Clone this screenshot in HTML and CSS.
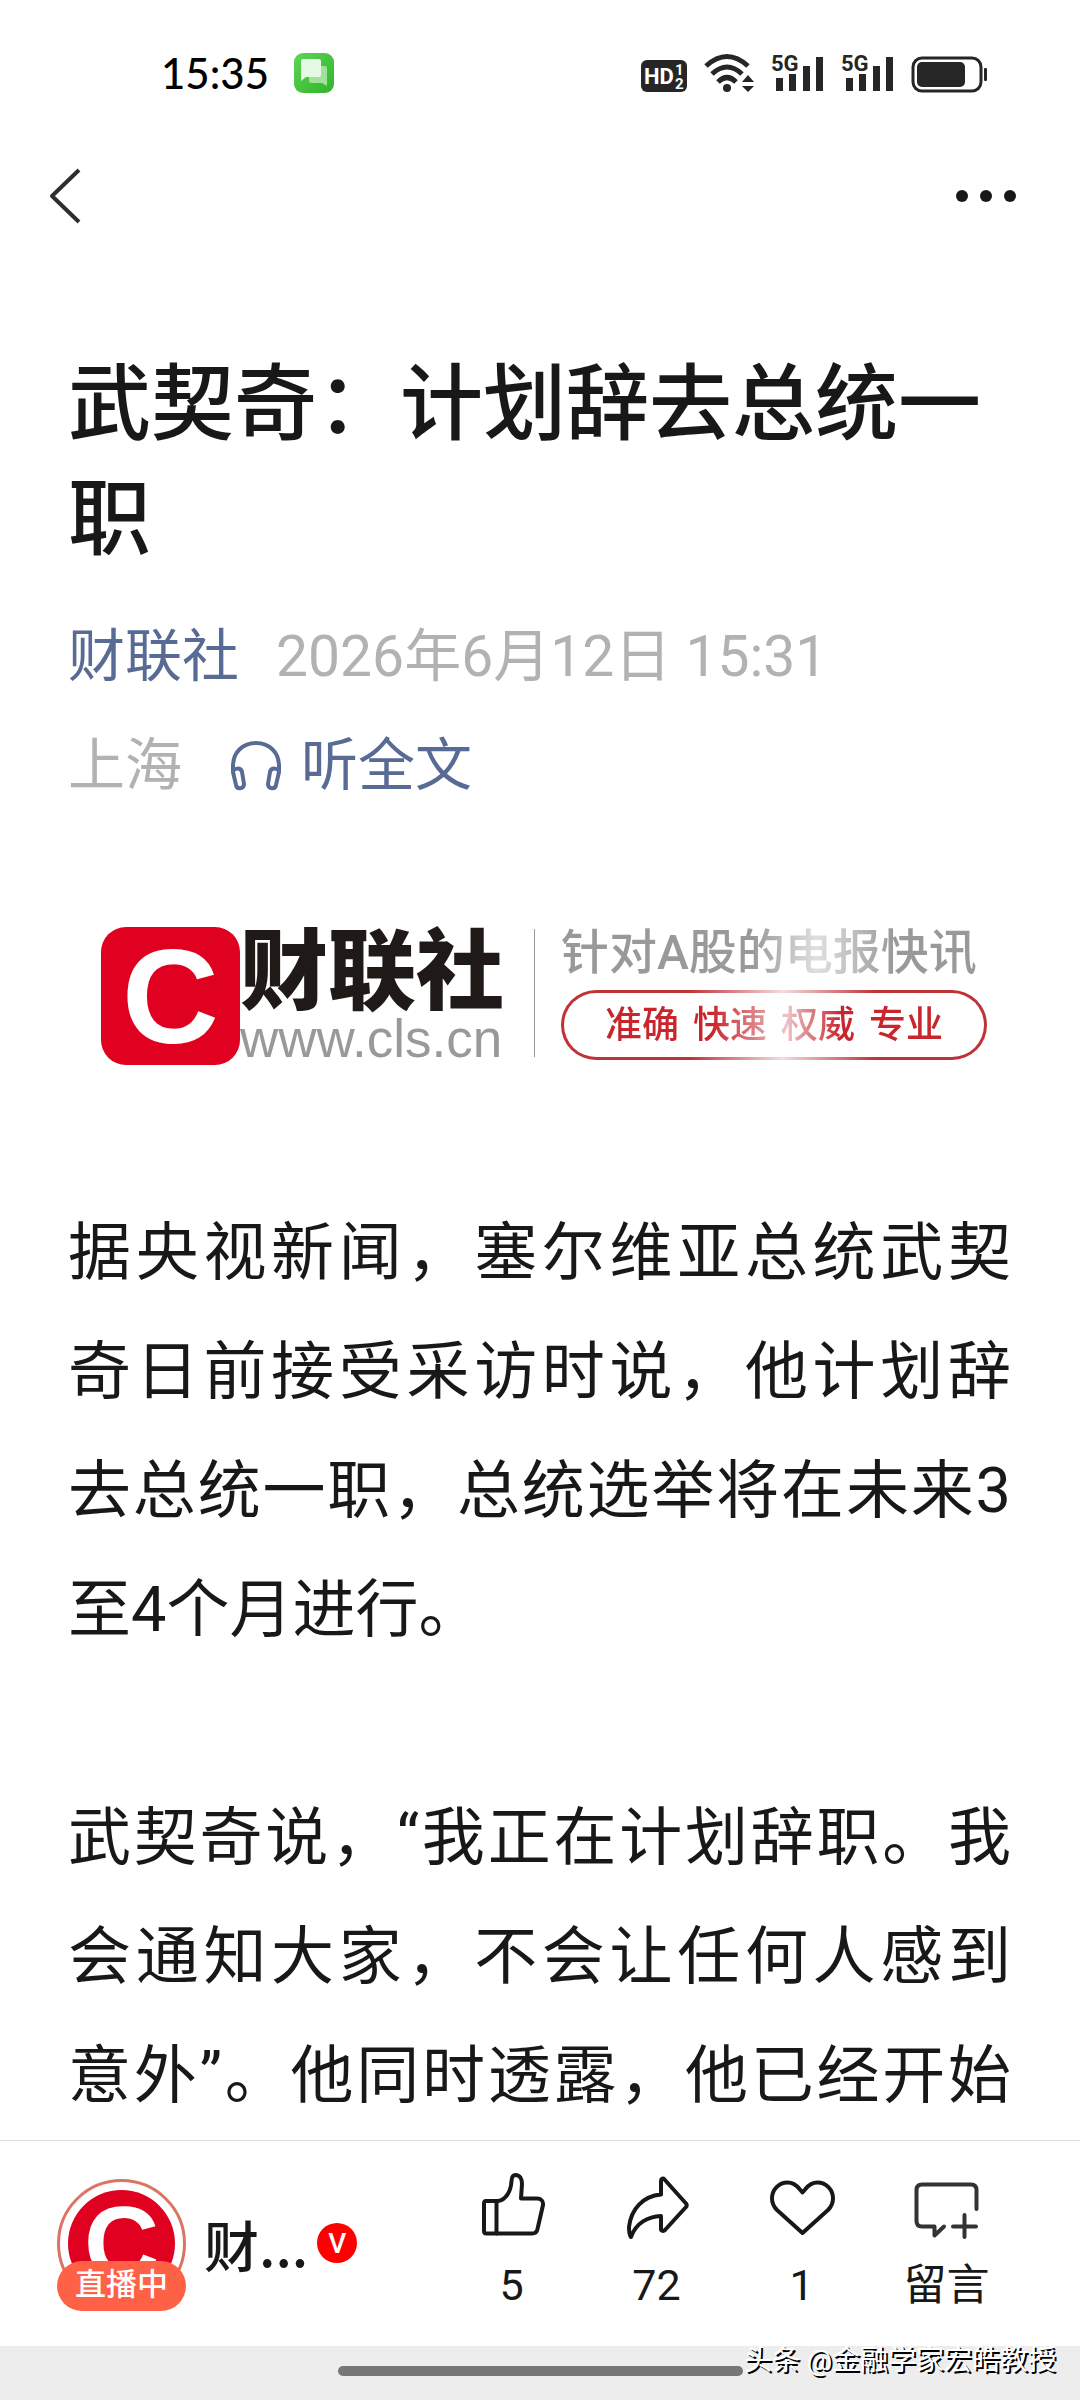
FILE: index.html
```html
<!DOCTYPE html>
<html lang="zh-CN">
<head>
    <meta charset="UTF-8">
    <meta name="viewport" content="width=device-width, initial-scale=1.0">
    <title>武契奇：计划辞去总统一职</title>
    <link rel="stylesheet" href="styles.css">
</head>
<body>
    <div class="status-bar">
        <div class="status-left">
            <span class="clock">15:35</span>
            <svg width="40" height="40" viewBox="0 0 40 40" aria-hidden="true">
                <defs>
                    <linearGradient id="green" x1="0" y1="0" x2="1" y2="1">
                        <stop offset="0" stop-color="#5fd455"/>
                        <stop offset="1" stop-color="#2fb52a"/>
                    </linearGradient>
                </defs>
                <rect width="40" height="40" rx="9" fill="url(#green)"/>
                <path d="M15 13H31Q33 13 33 15V33L28 30H17Q15 30 15 28Z" fill="#9fe39a"/>
                <path d="M9 6H25Q27 6 27 8V22Q27 24 25 24H12L7 28V8Q7 6 9 6Z" fill="#e6f9e5"/>
            </svg>
        </div>
        <div class="status-right">
            <svg width="46" height="38" viewBox="0 0 46 38" aria-hidden="true">
                <rect y="6" width="46" height="32" rx="6" fill="#262626"/>
                <g class="badge-text">
                    <text x="3" y="30" font-size="22">HD</text>
                    <text x="34" y="21" font-size="15">1</text>
                    <text x="34" y="35" font-size="15">2</text>
                </g>
            </svg>
            <svg width="50" height="38" viewBox="0 0 50 38" aria-hidden="true">
                <g fill="none" stroke="#262626" stroke-width="5">
                    <path d="M2 12Q23 -7 44 12"/>
                    <path d="M8 20Q23 6 38 20"/>
                    <path d="M14 28Q23 19 32 28"/>
                </g>
                <circle cx="23" cy="34" r="4" fill="#262626"/>
                <path d="M38 28L44 21L50 28ZM38 32H50L44 38Z" fill="#262626"/>
            </svg>
            <svg width="53" height="38" viewBox="0 0 53 38" aria-hidden="true">
                <text class="network" x="0" y="17">5G</text>
                <path d="M5 24h7v13h-7zM18 20h7v17h-7zM32 12h7v25h-7zM45 3h7v34h-7z" fill="#262626"/>
            </svg>
            <svg width="53" height="38" viewBox="0 0 53 38" aria-hidden="true">
                <text class="network" x="0" y="17">5G</text>
                <path d="M5 24h7v13h-7zM18 20h7v17h-7zM32 12h7v25h-7zM45 3h7v34h-7z" fill="#262626"/>
            </svg>
            <svg width="76" height="38" viewBox="0 0 76 38" aria-hidden="true">
                <rect x="2" y="4" width="68" height="33" rx="9" fill="none" stroke="#262626" stroke-width="3"/>
                <rect x="6" y="8" width="48" height="25" rx="5" fill="#262626"/>
                <rect x="73" y="14" width="3" height="13" rx="1" fill="#262626"/>
            </svg>
        </div>
    </div>

    <nav class="nav">
        <button type="button" class="nav-button" aria-label="返回">
            <svg width="36" height="60" viewBox="0 0 36 60">
                <path d="M32 4L5 30L32 56" fill="none" stroke="#2e2e2e" stroke-width="4" stroke-linejoin="round"/>
            </svg>
        </button>
        <button type="button" class="nav-button" aria-label="更多">
            <svg width="60" height="60" viewBox="0 0 60 60">
                <g fill="#181818">
                    <circle cx="6" cy="30" r="6"/>
                    <circle cx="30" cy="30" r="6"/>
                    <circle cx="54" cy="30" r="6"/>
                </g>
            </svg>
        </button>
    </nav>

    <main class="article">
        <h1>武契奇：计划辞去总统一职</h1>
        <div class="meta">
            <div class="meta-row">
                <a href="#">财联社</a>
                <span>2026年6月12日 15:31</span>
            </div>
            <div class="meta-row meta-place">
                <span>上海</span>
                <a href="#" class="listen">
                    <svg width="50" height="50" viewBox="0 0 50 50" fill="none" stroke="#576b95" stroke-width="4" stroke-linejoin="round" aria-hidden="true">
                        <path d="M2 32V25C2 11 12 2 25 2S48 11 48 25V32"/>
                        <path d="M2 31C2 27 10 26 11 31L13 43C13 48 6 49 5 44Z"/>
                        <path d="M48 31C48 27 40 26 39 31L37 43C37 48 44 49 45 44Z"/>
                    </svg>
                    听全文
                </a>
            </div>
        </div>

        <div class="banner">
            <span class="logo">C</span>
            <div class="brand">
                <strong>财联社</strong>
                <span>www.cls.cn</span>
            </div>
            <div class="slogan">
                <span class="slogan-title">针对A股的电报快讯</span>
                <div class="pill">
                    <div class="pill-text">
                        <span>准确</span>
                        <span>快速</span>
                        <span>权威</span>
                        <span>专业</span>
                    </div>
                </div>
            </div>
        </div>

        <p>据央视新闻，塞尔维亚总统武契奇日前接受采访时说，他计划辞去总统一职，总统选举将在未来3至4个月进行。</p>
        <p class="continued">武契奇说，“我正在计划辞职。我会通知大家，不会让任何人感到意外”。他同时透露，他已经开始</p>
    </main>

    <footer class="toolbar">
        <a href="#" class="account">
            <span class="avatar">
                <span class="avatar-logo">C</span>
                <span class="live">直播中</span>
            </span>
            <span class="account-name">财...</span>
            <span class="verified">V</span>
        </a>
        <div class="actions">
            <button type="button" class="action">
                <svg width="66" height="66" viewBox="0 0 66 66">
                    <path d="M7 28H19C27 27 32 18 32.500 8C32.700 4 34 2 36.500 2C41 2 43 6 43 11L42 25.500H58C62 25.500 64.500 28 64 32L58.500 56C58 59 56 60.500 53 60.500H7.500C6 60.500 5 60 5 58V30.500C5 28.500 5.500 28 7 28Z"/>
                    <path d="M17.500 28V60.500"/>
                </svg>
                <span>5</span>
            </button>
            <button type="button" class="action">
                <svg width="66" height="66" viewBox="0 0 66 66">
                    <path d="M37 21.500V8C37 5.500 39 5 40.500 6.500L62 30.500C63 31.500 63 33 62 34L41 57C39.500 58.500 37 58 37 56V43C24 43.500 12 50 7 64C5 62 5 58 5 54C7 36 19 23 37 21.500Z"/>
                </svg>
                <span>72</span>
            </button>
            <button type="button" class="action">
                <svg width="66" height="66" viewBox="0 0 66 66">
                    <path d="M33.500 19.500L30.500 16C27 11.500 23 9.500 18.500 9.500C10 9.500 3 16.500 3 25.500C3 30 4.500 33.500 8 37L33.500 60L59 37C62.500 33.500 64 30 64 25.500C64 16.500 57 9.500 48.500 9.500C44 9.500 40 11.500 36.500 16Z"/>
                </svg>
                <span>1</span>
            </button>
            <button type="button" class="action">
                <svg width="66" height="66" viewBox="0 0 66 66" class="comment-icon">
                    <path d="M62.500 36V17C62.500 13 60.500 11.500 57 11.500H8C4.500 11.500 2.500 13 2.500 17V48C2.500 52 4.500 53.500 8 53.500H20.500V62.500L30 53.500"/>
                    <path d="M50.500 42V64M39 53.500H62"/>
                </svg>
                <span>留言</span>
            </button>
        </div>
    </footer>

    <div class="home-bar">
        <div class="home-indicator"></div>
        <span class="watermark">头条 @金融学家宏皓教授</span>
    </div>
</body>
</html>
```
FILE: styles.css
```css
* {
    box-sizing: border-box;
}

body {
    font-family: Roboto, "Noto Sans CJK SC", sans-serif;
    background-color: #ffffff;
    color: #181818;
    margin: 0;
    min-height: 100vh;
    display: flex;
    flex-direction: column;
}

svg {
    display: block;
    flex: none;
    overflow: visible;
}

a {
    color: #576b95;
    text-decoration: none;
}

button {
    background: none;
    border: none;
    padding: 0;
    color: inherit;
    font-family: inherit;
    cursor: pointer;
}

/* status bar */
.status-bar {
    display: flex;
    justify-content: space-between;
    align-items: center;
    height: 146px;
    padding: 0 93px 0 161px;
}

.status-left {
    display: flex;
    align-items: center;
    gap: 25px;
}

.clock {
    font-family: Lato, sans-serif;
    font-size: 42px;
    font-weight: 500;
    color: #000000;
}

.status-right {
    display: flex;
    align-items: center;
    gap: 17px;
}

.badge-text {
    fill: #ffffff;
    font-weight: bold;
}

.network {
    fill: #262626;
    font-size: 22px;
    font-weight: bold;
}

/* navigation */
.nav {
    display: flex;
    justify-content: space-between;
    align-items: center;
    height: 100px;
    padding: 0 64px 0 47px;
}

/* article */
.article {
    flex: 1;
    padding: 101px 69px 0 68px;
}

h1 {
    margin: 0 0 25px;
    font-size: 83px;
    font-weight: 500;
    line-height: 115px;
}

.meta {
    font-size: 57px;
    line-height: 109px;
    color: #b2b2b2;
}

.meta-row {
    display: flex;
    gap: 37px;
}

.meta-place {
    gap: 49px;
}

.listen {
    display: flex;
    align-items: center;
    gap: 20px;
}

.banner {
    display: flex;
    margin: 107px 24px 128px 33px;
    height: 138px;
}

.logo {
    flex: none;
    width: 139px;
    border-radius: 25px;
    background-color: #e0001f;
    color: #ffffff;
    font-family: "Liberation Sans", sans-serif;
    font-size: 134px;
    font-weight: bold;
    line-height: 140px;
    text-align: center;
}

.brand {
    display: flex;
    flex-direction: column;
    padding-right: 30px;
    margin: 2px 26px 8px 0;
    border-right: 1px solid #999999;
}

.brand strong {
    font-size: 88px;
    font-weight: 900;
    line-height: 86px;
    color: #1f1a17;
}

.brand span {
    font-family: "Liberation Sans", sans-serif;
    font-size: 53px;
    line-height: 48px;
    color: #999999;
}

.slogan {
    flex: 1;
    white-space: nowrap;
}

.slogan-title {
    display: block;
    font-size: 48px;
    font-weight: 500;
    line-height: 52px;
    color: transparent;
    background: linear-gradient(90deg, #999999 45%, #e0e0e0 60%, #999999 78%);
    background-clip: text;
}

.pill {
    height: 70px;
    margin-top: 11px;
    border: 3px solid transparent;
    border-radius: 35px;
    background: linear-gradient(#ffffff, #ffffff) padding-box,
        linear-gradient(90deg, #bf3238 30%, #f3dcdd 52%, #bf3238 74%) border-box;
}

.pill-text {
    display: flex;
    justify-content: center;
    gap: 14px;
    font-size: 37px;
    font-weight: 500;
    line-height: 66px;
    color: transparent;
    background: linear-gradient(90deg, #c8252c 35%, #ecc4c6 53%, #c8252c 66%);
    background-clip: text;
}

p {
    margin: 0 0 109px;
    font-size: 63px;
    line-height: 119px;
    text-align: justify;
}

.continued {
    margin-bottom: 0;
    text-align-last: justify;
}

/* bottom toolbar */
.toolbar {
    display: flex;
    justify-content: space-between;
    height: 206px;
    padding: 32px 61px 0 57px;
    border-top: 1px solid #dedede;
}

.account {
    display: flex;
    align-items: center;
    height: 140px;
    color: #181818;
}

.avatar {
    position: relative;
    width: 129px;
    height: 129px;
    padding: 8px;
    border: 3px solid #dc7464;
    border-radius: 50%;
}

.avatar-logo {
    display: block;
    height: 107px;
    border-radius: 50%;
    background-color: #e0001f;
    color: #ffffff;
    font-family: "Liberation Sans", sans-serif;
    font-size: 104px;
    font-weight: bold;
    line-height: 107px;
    text-align: center;
}

/* live label lies over the lower edge of the avatar */
.live {
    position: absolute;
    left: -3px;
    right: -3px;
    bottom: -6px;
    height: 50px;
    border-radius: 25px;
    background-color: #ff6146;
    color: #ffffff;
    font-size: 31px;
    font-weight: 500;
    line-height: 47px;
    text-align: center;
}

.account-name {
    margin-left: 18px;
    font-family: "Noto Sans CJK SC", sans-serif;
    font-size: 55px;
    line-height: 140px;
    font-weight: 500;
}

.verified {
    width: 40px;
    height: 40px;
    margin-left: 9px;
    border-radius: 50%;
    background-color: #ff0000;
    color: #ffffff;
    font-size: 28px;
    font-weight: 500;
    line-height: 42px;
    text-align: center;
}

.actions {
    display: grid;
    grid-template-columns: repeat(4, 145px);
}

.action {
    display: flex;
    flex-direction: column;
    align-items: center;
    gap: 17px;
    height: 142px;
    font-size: 43px;
    line-height: 58px;
}

.action svg {
    fill: none;
    stroke: #181818;
    stroke-width: 4;
    stroke-linejoin: round;
    stroke-linecap: round;
}

.action .comment-icon {
    stroke: #333333;
}

/* system home bar */
.home-bar {
    position: relative;
    height: 54px;
    padding-top: 20px;
    background-color: #ededed;
}

.home-indicator {
    width: 405px;
    height: 10px;
    margin: 0 auto;
    border-radius: 5px;
    background-color: #777777;
}

.watermark {
    position: absolute;
    right: 24px;
    top: 0;
    font-size: 28px;
    line-height: 30px;
    color: #ffffff;
    text-shadow: 2px 2px 0 #000000;
}
```
